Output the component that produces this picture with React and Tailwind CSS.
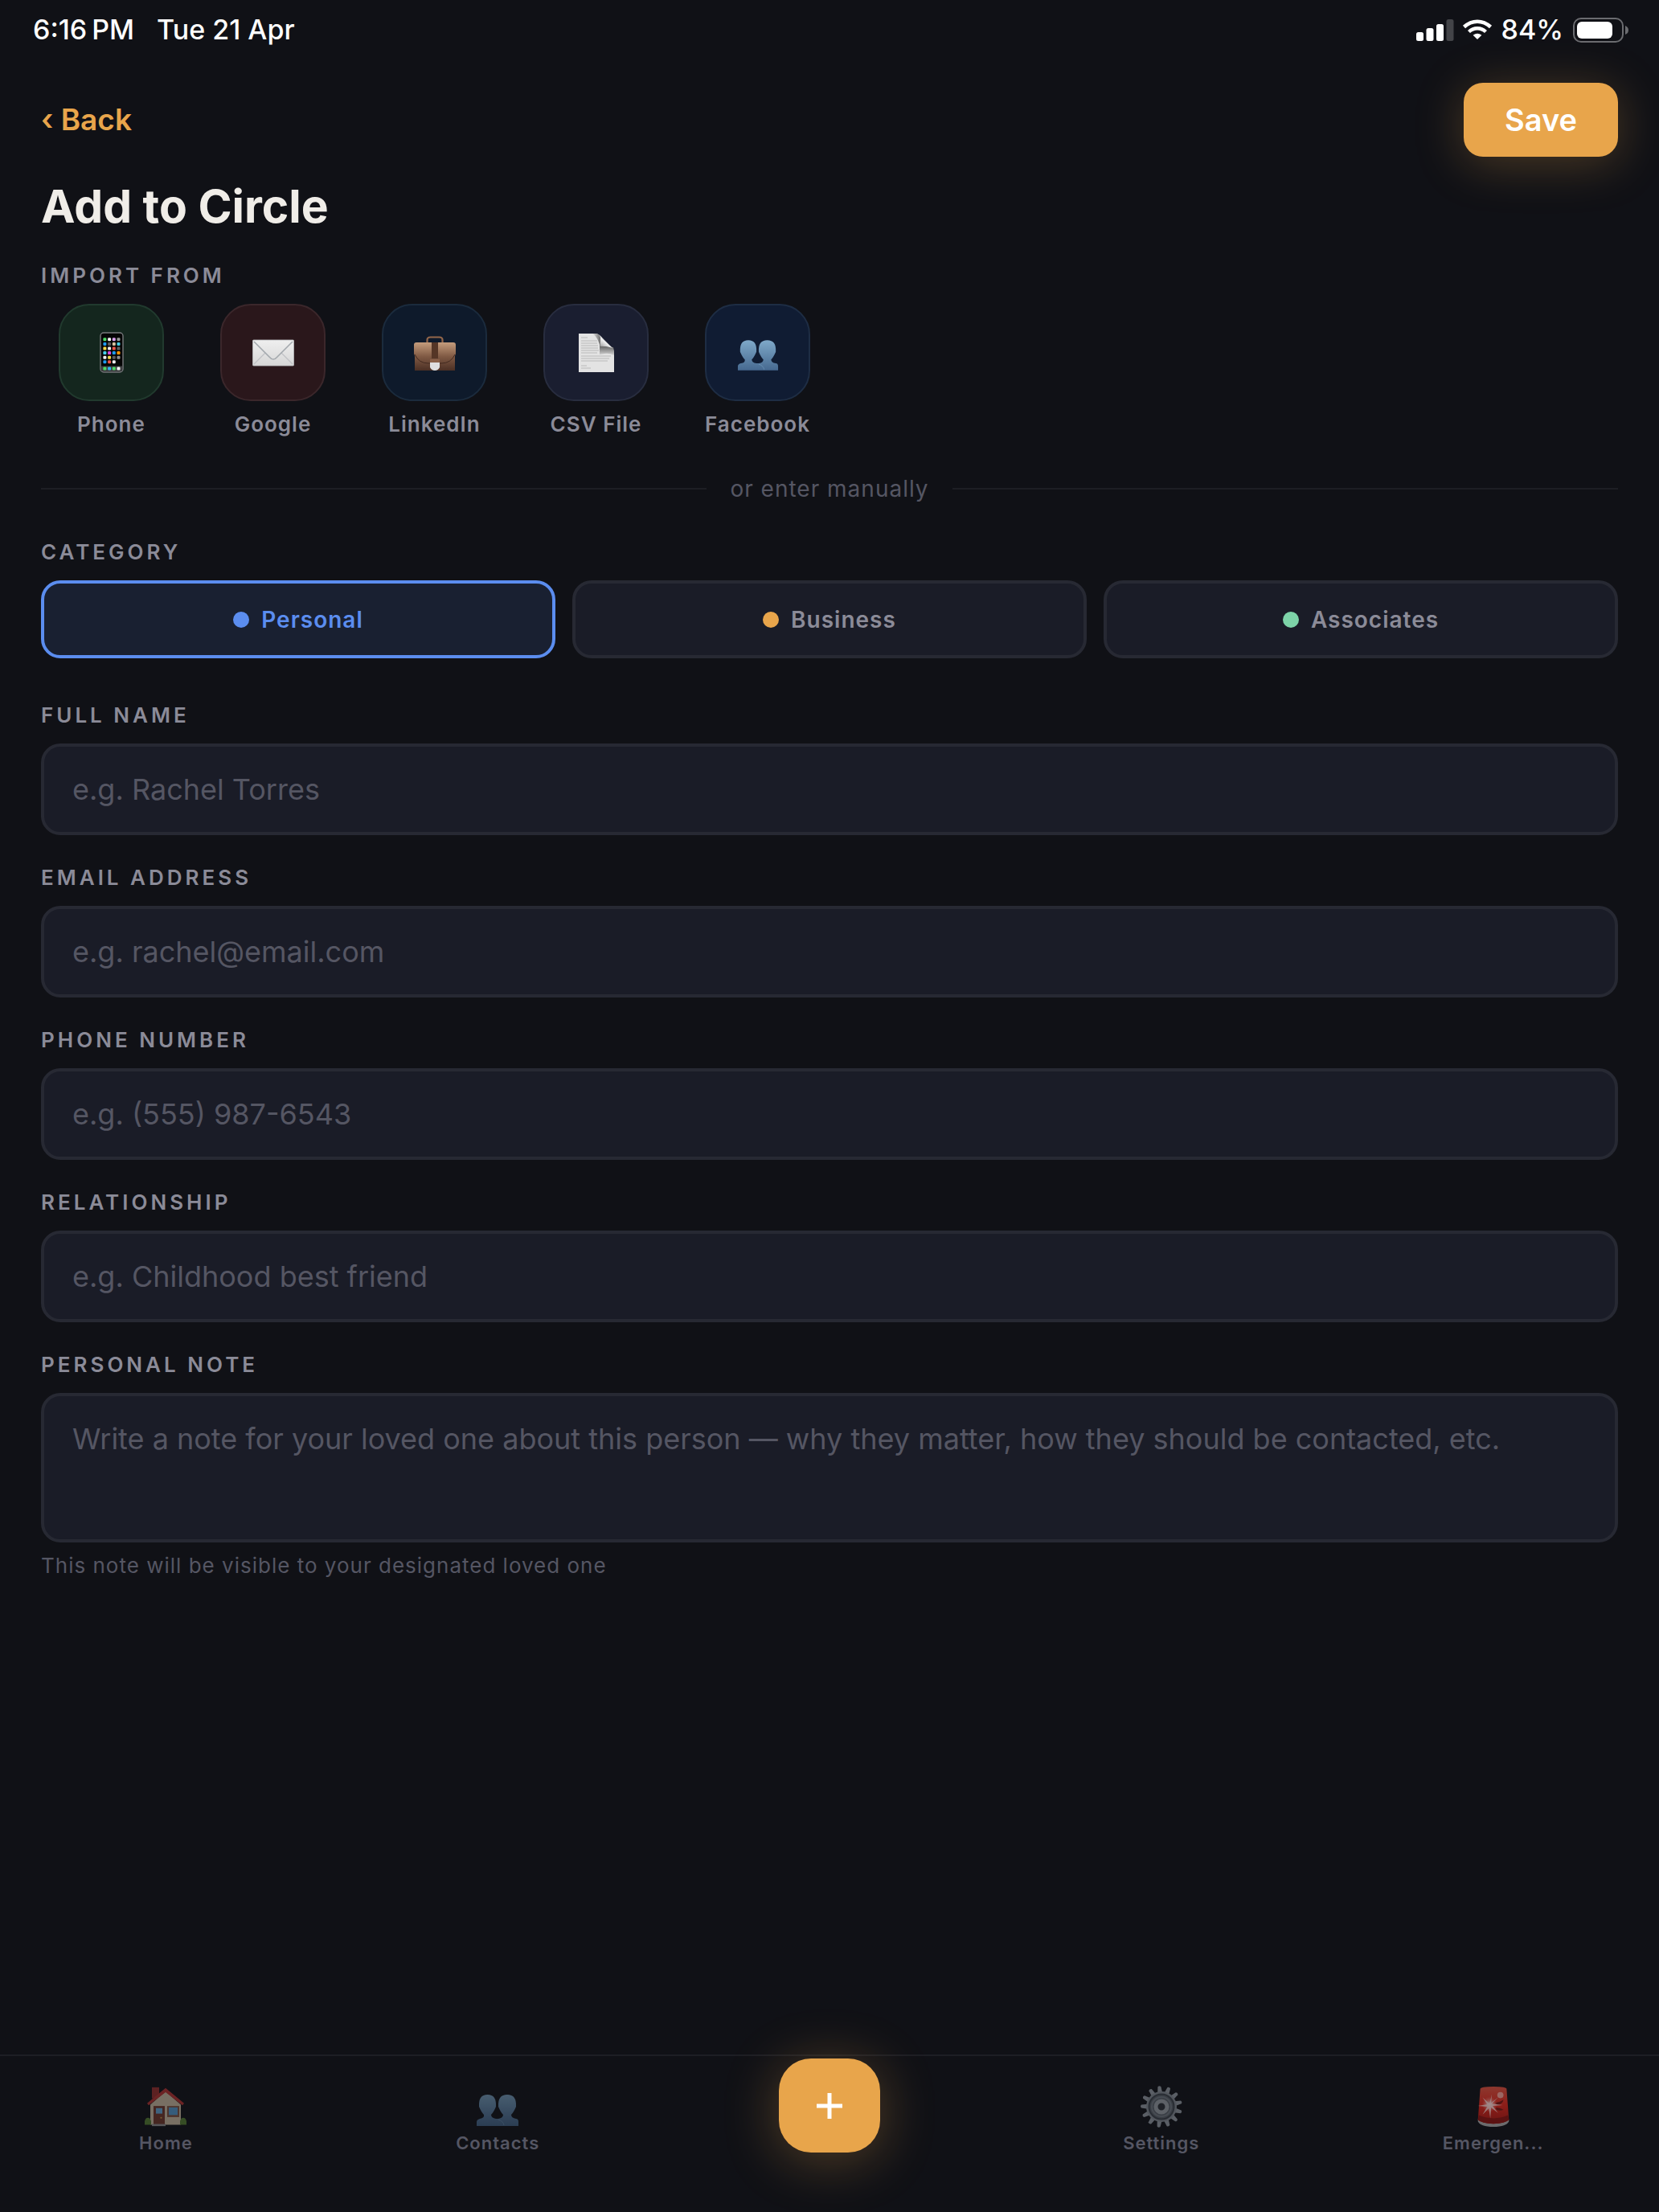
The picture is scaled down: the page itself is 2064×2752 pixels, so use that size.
import React from "react";

function PeopleIcon({ id, className }) {
  return (
    <svg viewBox="0 0 54 43" className={className} aria-hidden="true">
      <defs>
        <linearGradient id={id} x1="0" y1="0" x2="0" y2="1">
          <stop offset="0" stopColor="#7fa9c9" />
          <stop offset="1" stopColor="#466990" />
        </linearGradient>
      </defs>
      <path
        fill={`url(#${id})`}
        d="M1 41v-5q0-3 4-4 6-1 5-5Q7 24 4 17 3 2 14.500 2T25 17q-3 7-6 10 0 4 6 5h3q6-1 6-5-3-3-6-10Q27 2 39 2t11 15q-3 7-6 10 0 4 6 5 3 0 3 4v5z"
      />
      <path d="M28 33q6 2 7 7" fill="none" stroke="#7fa9c9" strokeOpacity=".5" strokeWidth="1" />
    </svg>
  );
}

const APP_COLORS = [
  ["#4cd964", "#f4f4f4", "#d9a0ee", "#9a9a9a"],
  ["#1f9bf0", "#5c5c5c", "#d8c3a0", "#45cfe6"],
  ["#f2d84a", "#eeeeee", "#f0564a", "#606060"],
  ["#45cfe6", "#d94ae0", "#1f9bf0", "#ff9500"],
  ["#eeeeee", "#f2d84a", "#5c5c5c", "#8f8f8f"],
  ["#1f9bf0", "#f0564a", "#eeeeee"],
];
const DOCK_COLORS = ["#4cd964", "#2fb4f0", "#4cd964", "#f4f4f4"];

function PhoneIcon() {
  return (
    <svg viewBox="0 0 30 52" className="h-[52px] w-[30px]" aria-hidden="true">
      <rect x="1" y="1" width="28" height="49" rx="4" fill="#050505" stroke="#77797c" strokeWidth="1.4" />
      {APP_COLORS.map((row, r) =>
        row.map((c, i) => (
          <rect key={`${r}-${i}`} x={4.4 + i * 5.7} y={7.3 + r * 5.6} width="4" height="4" rx="1.2" fill={c} />
        ))
      )}
      <path d="M2 42.5h26V46q0 3.300-3 3.300H5q-3 0-3-3.300z" fill="#3d3f40" />
      {DOCK_COLORS.map((c, i) => (
        <rect key={i} x={4.4 + i * 5.7} y="43.5" width="4" height="4" rx="1.2" fill={c} />
      ))}
    </svg>
  );
}

function EnvelopeIcon() {
  return (
    <svg viewBox="0 0 52 34" className="h-[34px] w-[52px]" aria-hidden="true">
      <defs>
        <linearGradient id="env" x1="0" y1="0" x2="0" y2="1">
          <stop offset="0" stopColor="#efefef" />
          <stop offset="1" stopColor="#d6d6d6" />
        </linearGradient>
      </defs>
      <rect x=".5" y="1" width="51" height="32" rx="1" fill="url(#env)" stroke="#b8babd" strokeWidth=".8" />
      <path d="M2 31l14-14M50 31L36 17" stroke="#bfc1c4" strokeWidth="1.2" />
      <path d="M2 3l19 19q5 6 10 0L50 3" fill="none" stroke="#a4a9ae" strokeWidth="1.6" />
    </svg>
  );
}

function BriefcaseIcon() {
  return (
    <svg viewBox="0 0 54 46" className="h-[46px] w-[54px]" aria-hidden="true">
      <defs>
        <linearGradient id="case" x1="0" y1="0" x2="0" y2="1">
          <stop offset="0" stopColor="#c49c7c" />
          <stop offset=".5" stopColor="#805a44" />
          <stop offset="1" stopColor="#4b2f24" />
        </linearGradient>
      </defs>
      <path d="M17.500 11V7q0-3.500 4-3.500h11q4 0 4 3.500v4" fill="none" stroke="#93664a" strokeWidth="2.2" />
      <path d="M1 13q0-3 3-3h46q3 0 3 3v11l-1 3v18H2V27l-1-3z" fill="url(#case)" />
      <path d="M2 25q5 11 17 11h16q12 0 17-11" fill="none" stroke="#432a20" strokeWidth="1" />
      <path d="M23 10h8v20h-8z" fill="#553626" />
      <path d="M21 31h12v4H21z" fill="#8a6049" />
      <path d="M21 35h12v6q-2 4-6 4t-6-4z" fill="#dfdfe0" />
    </svg>
  );
}

function DocumentIcon() {
  return (
    <svg viewBox="0 0 46 50" className="h-[50px] w-[46px]" aria-hidden="true">
      <defs>
        <linearGradient id="curl" x1="0" y1="1" x2="1" y2="0">
          <stop offset="0" stopColor="#8d8d8d" />
          <stop offset=".5" stopColor="#f4f4f4" />
          <stop offset="1" stopColor="#d0d0d0" />
        </linearGradient>
        <linearGradient id="fold" x1="0" y1="0" x2="0" y2="1">
          <stop offset="0" stopColor="#5e5e5e" />
          <stop offset="1" stopColor="#d4d4d4" />
        </linearGradient>
        <linearGradient id="crease" x1="0" y1="0" x2="1" y2="0">
          <stop offset="0" stopColor="#e3e3e3" />
          <stop offset="1" stopColor="#6e6e6e" />
        </linearGradient>
      </defs>
      <path d="M1 1h22q4 1 8 6l10 10q4 4 4 8v24H1z" fill="#e3e3e3" />
      <path
        d="M4 6h8M4 10h20M4 13h20M4 16h21M4 19h21M4 22h22M4 25h20M4 29h37M4 32h35M4 35h33M4 41h7M4 44h12"
        stroke="#c8c8c8"
        strokeWidth="1.3"
      />
      <path d="M27 16l17 2 1 5v5q-6-3-12-2l-6 1z" fill="url(#fold)" />
      <path d="M18 1h5q4 1 5 5v14q-2-14-10-19z" fill="url(#crease)" />
      <path d="M28 6l15 13q-8-3-15-2 1-5 0-11z" fill="url(#curl)" />
    </svg>
  );
}

function HouseIcon() {
  return (
    <svg viewBox="0 0 52 58" preserveAspectRatio="none" className="h-[50px] w-[52px] opacity-50" aria-hidden="true">
      <path d="M9 1h9v16H9z" fill="#a8322e" />
      <path d="M26 7L7 26v29h38V26z" fill="#dfcdb0" />
      <path d="M26 2L3 24l2 3L26 8l21 19 2-3z" fill="#c73633" />
      <path d="M0 55v-5q1-5 4-5t4 5v5zM44 55v-5q1-5 4-5t4 5v5z" fill="#5c8a34" />
      <path d="M11 28h14v27H11z" fill="#7a3b2c" />
      <path d="M14 31h8v8h-8z" fill="#6fb4e8" />
      <circle cx="20.5" cy="45" r="1.2" fill="#d9a54a" />
      <path d="M28 28h15v16H28z" fill="#8d5a44" />
      <path d="M30 30h11v11H30z" fill="#5ca6e0" />
      <path d="M9 54h17v3H9z" fill="#9b9b9b" />
    </svg>
  );
}

function GearIcon() {
  const teeth = Array.from({ length: 13 }, (_, i) => (i * 360) / 13 - 6);
  return (
    <svg viewBox="0 0 54 54" className="size-[54px] opacity-50" aria-hidden="true">
      {teeth.map((a) => (
        <path key={a} d="M24 10l1-8q2-2 4 0l1 8z" fill="#a3abb3" transform={`rotate(${a} 27 27)`} />
      ))}
      <circle cx="27" cy="27" r="19" fill="#9199a1" />
      <circle cx="27" cy="27" r="15.5" fill="#646c75" stroke="#434a52" strokeWidth="2" />
      <circle cx="27" cy="27" r="12" fill="none" stroke="#7f8790" strokeWidth="2" />
      <circle cx="27" cy="27" r="7" fill="#2f343a" stroke="#a9b0b8" strokeWidth="5" />
    </svg>
  );
}

function SirenIcon() {
  return (
    <svg viewBox="0 0 42 54" className="h-[52px] w-[42px] opacity-60" aria-hidden="true">
      <defs>
        <linearGradient id="siren" x1="0" y1="0" x2="0" y2="1">
          <stop offset="0" stopColor="#e05340" />
          <stop offset=".5" stopColor="#e0261b" />
          <stop offset="1" stopColor="#a81812" />
        </linearGradient>
        <radialGradient id="flash">
          <stop offset="0" stopColor="#ffffff" />
          <stop offset="1" stopColor="#ff8a80" stopOpacity="0" />
        </radialGradient>
      </defs>
      <path d="M1 43q20 8 40 0v3q-3 7-20 7T1 46z" fill="#a8a8a8" />
      <path d="M4 4q0-3 17-3t17 3l3 40q-5 5-20 5T1 44z" fill="url(#siren)" />
      <path d="M2 38q19 8 38 0l1 6q-5 5-20 5T1 44z" fill="#8d1410" />
      <circle cx="30" cy="12" r="4" fill="#f7a196" />
      <path d="M23 22q7-1 11-4-1 6-8 7zM24 28q6 0 10 3-4 2-9 0z" fill="#7c1712" />
      <circle cx="16" cy="24" r="10" fill="url(#flash)" />
      <path
        d="M16 23l3-12-1 11 9-7-8 8 14 2-13 1 7 9-9-7-1 14-2-13-8 8 6-10-12-1 12-2-6-9z"
        fill="#ffd9d5"
        fillOpacity=".85"
      />
    </svg>
  );
}

function StatusBar() {
  return (
    <div className="flex items-center justify-between pt-[17px] pr-[37px] pl-[41px] text-[34px] leading-[40px] font-medium text-white">
      <div className="flex gap-[28px]">
        <span>6:16&#8201;PM</span>
        <span>Tue 21 Apr</span>
      </div>
      <div className="flex items-center">
        <svg viewBox="0 0 48 27" className="mr-[10px] h-[27px] w-[48px]" aria-label="Signal strength">
          <rect x="1" y="16" width="9" height="11" rx="2.5" fill="#fff" />
          <rect x="13.5" y="11" width="9" height="16" rx="2.5" fill="#fff" />
          <rect x="26" y="6" width="9" height="21" rx="2.5" fill="#fff" />
          <rect x="38.5" y="0" width="9" height="27" rx="2.5" fill="#434448" />
        </svg>
        <svg viewBox="0 0 38 26" className="mr-[11px] h-[26px] w-[38px]" aria-label="Wi-Fi">
          <path d="M2.500 9.500Q10 2.700 19 2.700t16.500 6.800" fill="none" stroke="#fff" strokeWidth="4.6" />
          <path d="M8.500 15.500Q13 11.300 19 11.300t10.500 4.200" fill="none" stroke="#fff" strokeWidth="4.4" />
          <path d="M19 25l-5.400-5.200Q19 15.500 24.400 19.800z" fill="#fff" />
        </svg>
        <span>84%</span>
        <svg viewBox="0 0 70 31" className="ml-[12px] h-[31px] w-[70px]" aria-label="Battery">
          <rect x="1" y="1" width="61" height="29" rx="9" fill="none" stroke="#6b6c70" strokeWidth="2" />
          <rect x="5" y="5" width="44" height="21" rx="6" fill="#fff" />
          <path d="M65 10q4 1.500 4 5.500t-4 5.500z" fill="#6b6c70" />
        </svg>
      </div>
    </div>
  );
}

const SOURCES = [
  { name: "Phone", icon: <PhoneIcon />, box: "bg-[#14261e] border-[#213a2e]" },
  { name: "Google", icon: <EnvelopeIcon />, box: "bg-[#2a171b] border-[#3b272b]" },
  { name: "LinkedIn", icon: <BriefcaseIcon />, box: "bg-[#0e1a2b] border-[#1b2b3d]" },
  { name: "CSV File", icon: <DocumentIcon />, box: "bg-[#1a1e30] border-[#282d3f]" },
  { name: "Facebook", icon: <PeopleIcon id="fb" className="mt-[6px] h-[42px] w-[52px]" />, box: "bg-[#101c33] border-[#1e2d44]" },
];

const CATEGORIES = [
  { name: "Personal", dot: "bg-[#5b8def]", look: "border-[#5b8def] bg-[#192031] text-[#5b8def]" },
  { name: "Business", dot: "bg-[#e8a54b]", look: "border-[#272933] bg-[#1a1c27] text-[#8b8b98]" },
  { name: "Associates", dot: "bg-[#7dd3a8]", look: "border-[#272933] bg-[#1a1c27] text-[#8b8b98]" },
];

const FIELDS = [
  { id: "name", label: "FULL NAME", type: "text", hint: "e.g. Rachel Torres" },
  { id: "email", label: "EMAIL ADDRESS", type: "email", hint: "e.g. rachel@email.com" },
  { id: "phone", label: "PHONE NUMBER", type: "tel", hint: "e.g. (555) 987-6543" },
  { id: "relation", label: "RELATIONSHIP", type: "text", hint: "e.g. Childhood best friend" },
];

const LABEL = "block text-[26px] leading-[32px] font-semibold tracking-[4px] text-[#8b8b98]";
const FIELD =
  "block w-full rounded-[24px] border-4 border-[#272933] bg-[#1a1c27] px-[35px] text-[36px] leading-[42px] text-[#f0ede8] placeholder:text-[#555663] outline-none";

function NavItem({ label, children }) {
  return (
    <button type="button" className="flex flex-1 flex-col items-center gap-[2px] pt-[34px] text-[22px] leading-[28px] font-semibold tracking-[1px] text-[#555663]">
      <span className="flex h-[58px] items-center">{children}</span>
      <span>{label}</span>
    </button>
  );
}

export default function App() {
  return (
    <div className="flex min-h-screen flex-col bg-[#101116] font-['Inter',sans-serif]">
      <StatusBar />
      <main className="flex flex-1 flex-col px-[51px] pt-[46px]">
        <header className="flex items-center justify-between">
          <a href="#back" className="text-[37px] leading-[42px] font-semibold text-[#e8a54b]">
            ‹ Back
          </a>
          <button
            type="button"
            className="h-[92px] rounded-[24px] bg-[#e8a54b] px-[51px] text-[38px] leading-[44px] font-semibold text-white shadow-[0_8px_60px_rgba(232,165,75,0.28)]"
          >
            Save
          </button>
        </header>
        <h1 className="mt-[27px] text-[57px] leading-[70px] font-bold text-[#f0ede8]">Add to Circle</h1>

        <section className="mt-[35px]">
          <h2 className={LABEL}>IMPORT FROM</h2>
          <div className="mt-[19px] flex gap-[26px]">
            {SOURCES.map((s) => (
              <button key={s.name} type="button" className="flex w-[175px] flex-col items-center gap-[12px]">
                <span className={`flex h-[121px] w-[131px] items-center justify-center rounded-[38px] border-2 ${s.box}`}>
                  {s.icon}
                </span>
                <span className="text-[26px] leading-[34px] font-semibold tracking-[1px] text-[#8b8b98]">{s.name}</span>
              </button>
            ))}
          </div>
        </section>

        <div className="mt-[45px] flex items-center gap-[29px]">
          <span className="h-[2px] flex-1 bg-[#1d1e24]" />
          <span className="text-[28px] leading-[36px] tracking-[1px] text-[#555663]">or enter manually</span>
          <span className="h-[2px] flex-1 bg-[#1d1e24]" />
        </div>

        <section className="mt-[45px]">
          <h2 className={LABEL}>CATEGORY</h2>
          <div className="mt-[19px] grid grid-cols-3 gap-[21px]">
            {CATEGORIES.map((c) => (
              <button
                key={c.name}
                type="button"
                className={`flex h-[97px] items-center justify-center gap-[15px] rounded-[24px] border-4 text-[28px] leading-[36px] font-semibold tracking-[1px] ${c.look}`}
              >
                <span className={`size-[20px] rounded-full ${c.dot}`} />
                {c.name}
              </button>
            ))}
          </div>
        </section>

        <form className="mt-[55px] flex flex-col gap-[37px]">
          {FIELDS.map((f) => (
            <div key={f.id}>
              <label htmlFor={f.id} className={LABEL}>
                {f.label}
              </label>
              <input id={f.id} type={f.type} placeholder={f.hint} className={`mt-[19px] h-[114px] ${FIELD}`} />
            </div>
          ))}
          <div>
            <label htmlFor="note" className={LABEL}>
              PERSONAL NOTE
            </label>
            <textarea
              id="note"
              placeholder="Write a note for your loved one about this person — why they matter, how they should be contacted, etc."
              className={`mt-[19px] h-[186px] resize-none py-[32px] ${FIELD}`}
            />
            <p className="mt-[12px] text-[26px] leading-[34px] tracking-[1px] text-[#555663]">
              This note will be visible to your designated loved one
            </p>
          </div>
        </form>
      </main>

      <nav className="flex h-[196px] items-start border-t-2 border-[#1d1e24]">
        <NavItem label="Home">
          <HouseIcon />
        </NavItem>
        <NavItem label="Contacts">
          <PeopleIcon id="nav" className="mt-[8px] h-[43px] w-[54px] opacity-50" />
        </NavItem>
        <div className="flex flex-1 justify-center pt-[3px]">
          <button
            type="button"
            aria-label="Add"
            className="flex h-[117px] w-[126px] items-center justify-center rounded-[40px] bg-[#e8a54b] shadow-[0_8px_68px_rgba(232,165,75,0.32)]"
          >
            <svg viewBox="0 0 34 34" className="size-[34px]" aria-hidden="true">
              <path d="M17 1v32M1 17h32" stroke="#fff" strokeWidth="5" />
            </svg>
          </button>
        </div>
        <NavItem label="Settings">
          <GearIcon />
        </NavItem>
        <NavItem label="Emergen...">
          <SirenIcon />
        </NavItem>
      </nav>
    </div>
  );
}
